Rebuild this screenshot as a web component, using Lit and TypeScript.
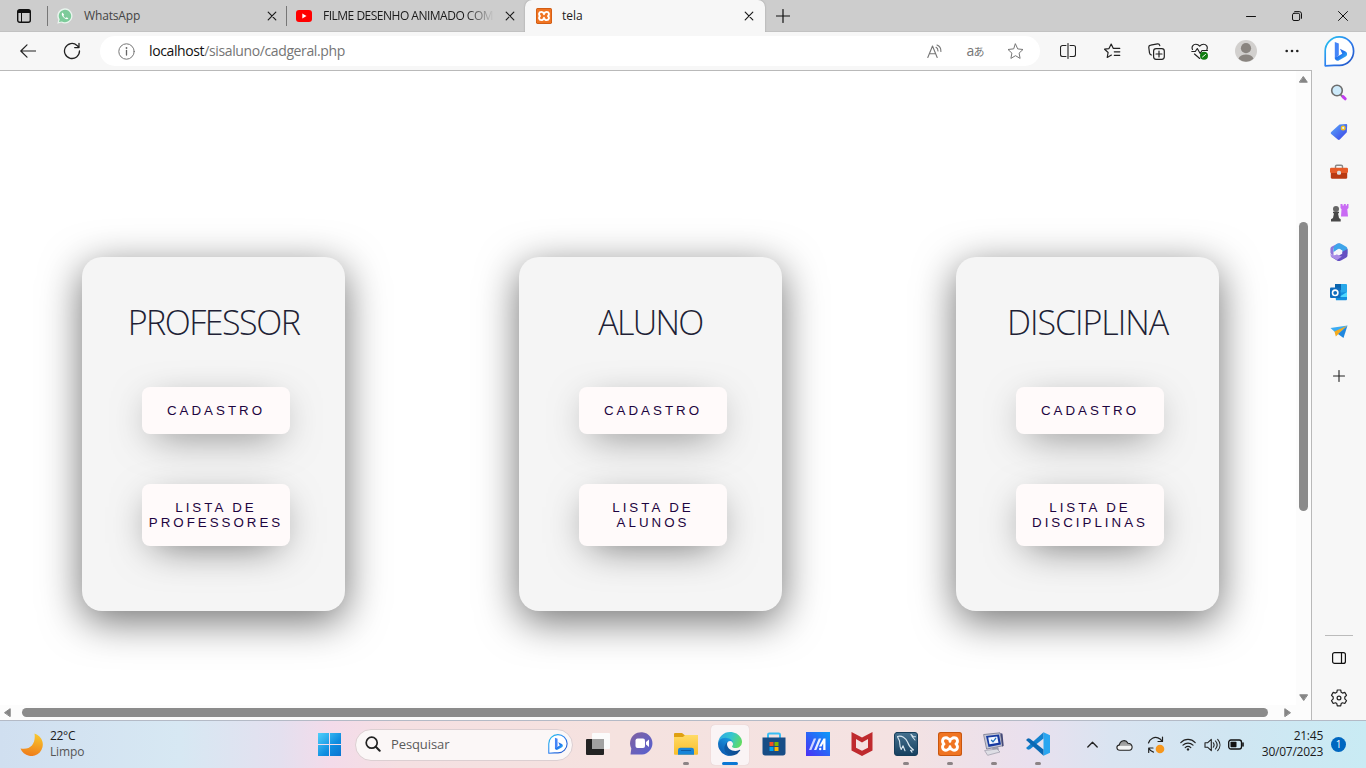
import { LitElement, html, svg, css, TemplateResult, SVGTemplateResult } from "lit";
import { customElement } from "lit/decorators.js";
import { classMap } from "lit/directives/class-map.js";

const icon = (w: number, h: number, body: SVGTemplateResult, box = `0 0 ${w} ${h}`) =>
  html`<svg width=${w} height=${h} viewBox=${box} fill="none" stroke-linecap="round" stroke-linejoin="round">${body}</svg>`;

const closeX = icon(10, 10, svg`<path d="M1.200 1.200l7.600 7.600M8.800 1.200l-7.600 7.600" stroke="#1b1b1b" stroke-width="1.200"/>`);

const xampp = (s: number) => icon(s, s, svg`
  <rect width="24" height="24" rx="2.500" fill="#c9560f"/><rect x="1" y="1" width="22" height="22" rx="2" fill="#f07422"/>
  <path d="M8 5.800c-3.800 0-4.400 4.200-2 6.200-2.400 2-1.800 6.200 2 6.200 2.300 0 2.200-1.700 4-1.700s1.700 1.700 4 1.700c3.800 0 4.400-4.200 2-6.200 2.400-2 1.800-6.200-2-6.200-2.300 0-2.200 1.700-4 1.700s-1.700-1.700-4-1.700z" stroke="#fff" stroke-width="2.900"/>
  <path d="M12 7v2.500M12 14.500V17" stroke="#fff" stroke-width="2.700"/>`, "0 0 24 24");

const bing = (s: number) => icon(s, s, svg`
  <defs><linearGradient id="bo" x1="0" y1="0" x2="1" y2="1"><stop offset="0" stop-color="#25c9ee"/><stop offset=".5" stop-color="#2d7ff0"/><stop offset="1" stop-color="#2350c0"/></linearGradient>
  <linearGradient id="bi" x1="0" y1="0" x2="1" y2="1"><stop offset="0" stop-color="#2a5fe8"/><stop offset=".5" stop-color="#2377ee"/><stop offset="1" stop-color="#38cdf5"/></linearGradient></defs>
  <path d="M1.200 29.800V15.500A14.200 14.200 0 1 1 15.500 29.300H10z" fill="#fff" stroke="url(#bo)" stroke-width="1.700"/>
  <path d="M10.800 6l4 1.500v11.700l-4 3.600z" fill="#4585f7"/><path d="M10.800 21.800l4-2 3.500-2-2.400-5 5.600 2.600c2 1 2.200 3.800.2 5.200l-7 4c-1.600.8-3.900-.6-3.900-2.800z" fill="url(#bi)"/>`, "0 0 31 31");

const g = {
  workspace: icon(14, 14, svg`<rect x=".7" y=".7" width="12.600" height="12.600" rx="2" stroke="#111" stroke-width="1.400"/><path d="M1 1h12v3H1z" fill="#111"/><path d="M4.500 4v9" stroke="#111" stroke-width="1"/>`),
  whatsapp: icon(16, 16, svg`<path d="M.3 15.700l1-4A7.600 7.600 0 1 1 4.300 14.600z" fill="#e9f5ee"/><path d="M2 14l.7-2.700a6.200 6.200 0 1 1 2.200 2.100z" fill="#7dcb9a"/><path d="M5.500 4.400c-1.400 1-.8 3 .9 4.900 1.800 1.800 4 2.700 5 1.200l-1.600-1.200-1 .8C7.700 9.600 6.800 8.700 6.400 7.700l.7-.9z" fill="#fff"/>`),
  youtube: icon(16, 12, svg`<rect width="16" height="12" rx="3" fill="#f00"/><path d="M6.300 3.500v5l4.200-2.500z" fill="#fff"/>`),
  plus: icon(14, 14, svg`<path d="M7 .5v13M.5 7h13" stroke="#111" stroke-width="1.200"/>`),
  plusSmall: icon(12, 12, svg`<path d="M6 .5v11M.5 6h11" stroke="#222" stroke-width="1.100"/>`),
  min: icon(10, 10, svg`<path d="M.5 5.500h9" stroke="#111"/>`),
  restore: icon(10, 10, svg`<rect x=".5" y="2.300" width="7.200" height="7.200" rx="1.500" stroke="#111"/><path d="M2.700.6h4.500a2.300 2.300 0 0 1 2.300 2.300v4.400" stroke="#111"/>`),
  closeWin: icon(10, 10, svg`<path d="M.5.5l9 9M9.500.5l-9 9" stroke="#111"/>`),
  back: icon(16, 14, svg`<path d="M15.500 7H1M7 .8L.8 7 7 13.200" stroke="#222" stroke-width="1.200"/>`),
  refresh: icon(18, 18, svg`<path d="M16.500 9A7.500 7.500 0 1 1 14 3.400L16 5.500M16 1.300v4.300h-4.300" stroke="#222" stroke-width="1.300"/>`),
  info: icon(17, 17, svg`<circle cx="8.500" cy="8.500" r="7.700" stroke="#767676"/><path d="M8.500 7.500v4.500" stroke="#666" stroke-width="1.300"/><circle cx="8.500" cy="5" r=".9" fill="#666"/>`),
  readAloud: icon(16, 15, svg`<path d="M.8 13.500L5.500 2l4.700 11.500M2.400 9.700h6.200" stroke="#767676" stroke-width="1.100"/><path d="M9 3.300c1.300.6 2 1.800 2 3.600M10 1c2.700 1 4 3.200 3.900 6.400" stroke="#767676" stroke-width="1.100"/>`),
  star: icon(17, 17, svg`<path d="M8.500 1l2.200 4.900 5.300.6-3.900 3.600 1 5.300-4.600-2.700-4.600 2.700 1-5.300L1 6.500l5.300-.6z" stroke="#767676"/>`),
  split: icon(16, 16, svg`<path d="M6 2.500H2.500a2 2 0 0 0-2 2v7a2 2 0 0 0 2 2H6M10 2.500h3.500a2 2 0 0 1 2 2v7a2 2 0 0 1-2 2H10M8 .5v15" stroke="#222" stroke-width="1.100"/>`),
  favorites: icon(17, 16, svg`<path d="M9.800 5.300H9.200L7.200 1 5 5.600l-4.400.6 3.500 3.300-.9 5 4.200-2.400M9.800 5.300h6M10.300 8.800h5.500M10.300 12.300h5.500" stroke="#222" stroke-width="1.200"/>`),
  collections: icon(17, 17, svg`<rect x="5.600" y="5.600" width="10.700" height="10.700" rx="2.500" stroke="#222" stroke-width="1.200"/><path d="M11 8v6M8 11h6M3.600 12C2 12 1.700 10.700 1.500 9.800L.8 4.500C.6 3 1.300 2.300 2.700 2.100L9.500.9c1.300-.2 2 .4 2.300 1.700" stroke="#222" stroke-width="1.200"/>`),
  health: icon(18, 17, svg`<path d="M1.500 6.500C.2 3.800 2.200 1.200 4.800 1.200c1.800 0 3 .8 3.900 2 .9-1.200 2.100-2 3.900-2 2.600 0 4.500 2.600 3.300 5.300M.8 8.500h3.500l2-3 2.900 5 1.800-3h5.500M3.500 11l5.200 4.500" stroke="#222" stroke-width="1.150"/><circle cx="13" cy="12.700" r="4" fill="#107c10"/><path d="M11.500 14l3-2.500" stroke="#fff"/>`),
  profile: icon(22, 22, svg`<circle cx="11" cy="11" r="11" fill="#d2d0ce"/><circle cx="11" cy="8.200" r="5.100" fill="#8a8580"/><path d="M3.500 18.800c1-3 4-4.300 7.500-4.300s6.500 1.300 7.500 4.300a11 11 0 0 1-15 0z" fill="#8a8580"/>`),
  dots: icon(14, 4, svg`<circle cx="1.700" cy="2" r="1.300" fill="#222"/><circle cx="7" cy="2" r="1.300" fill="#222"/><circle cx="12.300" cy="2" r="1.300" fill="#222"/>`),
  search: icon(19, 17, svg`<path d="M11.200 11.200l2 2" stroke="#777" stroke-width="2"/><circle cx="7" cy="6.500" r="5.300" fill="#cdeafa" stroke="#6d6d6d" stroke-width="1.600"/><path d="M13 12.600l2.200 2.200" stroke="#c13df0" stroke-width="3"/>`),
  tag: icon(18, 18, svg`<defs><linearGradient id="tg" x1="0" y1="0" x2="1" y2="1"><stop stop-color="#5cabfb"/><stop offset="1" stop-color="#3a3fe6"/></linearGradient></defs><path d="M9.500 1.500L16 1c.8 0 1.200.5 1.200 1.200l-.4 7-7 7.400c-.7.600-1.400.600-2 0L1.200 10.900c-.6-.6-.6-1.400 0-2z" fill="url(#tg)"/><circle cx="13.200" cy="4.900" r="1.800" fill="#e6eaff" stroke="#f3c11b" stroke-width="1.400"/>`),
  toolbox: icon(18, 16, svg`<path d="M5.500 4V2.500c0-.8.500-1.300 1.300-1.300h4.400c.8 0 1.300.5 1.300 1.300V4" stroke="#888" stroke-width="1.400"/><rect y="3.700" width="18" height="5.300" rx="1.200" fill="#e65b28"/><path d="M.8 9h16.400v4.500c0 .8-.5 1.200-1.200 1.200H2c-.8 0-1.200-.5-1.200-1.200z" fill="#b93a12"/><rect x="7" y="6.800" width="4" height="4" rx="1.500" fill="#ddd"/>`),
  chess: icon(19, 19, svg`<path d="M10.500 1h2v1.500h1.300V1h2v1.500H17V1h1.500v4l-1.200 1.200.7 7.300h-7l.5-7.300L10.500 5z" fill="#c96bf4"/><circle cx="6" cy="6" r="3" fill="#666"/><path d="M3 8.800h6v1.500H8l1 4.700 1.700 1.300v2.200H1v-2.200L3 15l1-4.700H3z" fill="#484848"/>`),
  m365: icon(18, 18, svg`<path d="M10.500.8L5.500 3.200C4 4 3.500 5 3.500 6.500v6l-2-1.200C.6 10.700.4 10 .4 9V6.200c0-1.200.5-2 1.500-2.600L7 .9C8.200.3 9.500.3 10.500.8z" fill="#8f75dc"/><path d="M6.500 1.100C8.500 0 9.700 0 11.500 1l4.300 2.500c1.200.7 1.700 1.600 1.700 2.900v4.300l-5.200-1.500V7.500L9 5.700 3.500 9V5.500C3.500 4 4 3.200 5 2.500z" fill="#3fa5ea"/><path d="M17.500 6v6c0 1.300-.5 2.200-1.600 2.800L11 17.500c-1.500.8-2.600.7-4-.1l-4.800-2.800C1.500 14.200 1 13.700.7 13c1.500.8 3 .6 4.500-.3l7.100-4z" fill="#6550c2"/><path d="M2 14.300c-1.200-.8-1.600-2-1.600-3.300l2.600 1c1.500.5 2.500.1 4-.8l2 1.200 3 1-5 3.700z" fill="#a98be6"/><path d="M9 5.700l3.200 1.800v3.200L9 12.500l-3.200-1.800V7.500z" fill="#f4f4fb"/>`),
  outlook: icon(18, 17, svg`<rect x="5" y="0" width="12" height="13" rx="1" fill="#28a8ea"/><path d="M5 0h6v6H5z" fill="#0a64ad"/><path d="M5 9l12-1v7c0 .8-.5 1.300-1.300 1.300H6z" fill="#1490df"/><path d="M9 13l8-5v5z" fill="#50d9ff"/><rect x="0" y="3.500" width="10.500" height="10.500" rx="1" fill="#0f6cbd"/><circle cx="5.200" cy="8.800" r="2.700" stroke="#fff" stroke-width="1.600"/>`),
  plane: icon(18, 14, svg`<path d="M.5 3L17.500.5 6 8z" fill="#3babf2"/><path d="M4.500 6.500L17.500.5 5.800 11.500z" fill="#f4ab1e"/><path d="M8 9L17.500.5l-4 12.500z" fill="#2087de"/>`),
  panel: icon(14, 12, svg`<rect x=".6" y=".6" width="12.800" height="10.800" rx="2" stroke="#111" stroke-width="1.200"/><path d="M9.500 1v10" stroke="#111" stroke-width="1.200"/>`),
  gear: icon(18, 18, svg`<path d="M7.300 1h3.400l.5 2.300 1.300.8 2.300-.7 1.700 2.900-1.700 1.700v1.900l1.700 1.700-1.700 2.900-2.300-.7-1.300.8-.5 2.300H7.300l-.5-2.300-1.300-.8-2.300.7-1.700-2.900L3.200 9.900V8L1.500 6.300l1.700-2.900 2.300.7 1.300-.8z" stroke="#222" stroke-width="1.200"/><circle cx="9" cy="9" r="1.900" stroke="#222" stroke-width="1.200"/>`),
  moon: icon(23, 23, svg`<defs><linearGradient id="mo" x1=".5" y1="0" x2=".3" y2="1"><stop stop-color="#f8c62d"/><stop offset="1" stop-color="#ef7a1a"/></linearGradient></defs><path d="M14.500.5A11.500 11.500 0 1 1 .5 15.500C11 17.500 16 10 14.500.5z" fill="url(#mo)"/>`),
  windows: icon(23, 23, svg`<defs><linearGradient id="wi" x1="0" y1="0" x2="1" y2="1"><stop stop-color="#4fd0fb"/><stop offset=".6" stop-color="#0f8de0"/><stop offset="1" stop-color="#0a74d1"/></linearGradient></defs><path d="M0 0h11v11H0zM12 0h11v11H12zM0 12h11v11H0zM12 12h11v11H12z" fill="url(#wi)"/>`),
  glass: icon(16, 16, svg`<circle cx="6.700" cy="6.700" r="5.500" stroke="#222" stroke-width="1.700"/><path d="M10.800 10.800L14.700 14.700" stroke="#222" stroke-width="2"/>`),
  taskview: icon(24, 22, svg`<rect y="6" width="18" height="16" rx="1" fill="#232323"/><rect x="6" width="18" height="16" rx="1" fill="#fbfbfb"/><path d="M6 6h12v10H6z" fill="#a2a2a2"/>`),
  chat: icon(24, 23, svg`<defs><linearGradient id="ch" x1="0" y1="0" x2="1" y2="1"><stop stop-color="#8162a0"/><stop offset="1" stop-color="#5560d2"/></linearGradient></defs><path d="M.5 22.500l.8-6A11.200 11.200 0 1 1 12 22.500z" fill="url(#ch)"/><rect x="5.500" y="6.500" width="9.500" height="9.500" rx="2" fill="#fff"/><path d="M16 10l3-2.500v7.500L16 12.500z" fill="#fff"/>`),
  folder: icon(24, 24, svg`<defs><linearGradient id="fo" x1="0" y1="0" x2="0" y2="1"><stop stop-color="#ffdb66"/><stop offset="1" stop-color="#f9bd2a"/></linearGradient></defs><path d="M0 2.200C0 1.500.5 1 1.200 1H8l2.500 2H24v8H0z" fill="#dfa012"/><path d="M0 5h9l2-2h13v18.500c0 .8-.5 1.300-1.200 1.300H1.200c-.7 0-1.200-.5-1.200-1.300z" fill="url(#fo)"/><path d="M4 22.800v-4.500c0-1.700 1-2.500 2.500-2.500h11c1.500 0 2.500.8 2.500 2.500v4.500z" fill="#1784d8"/><path d="M7.500 18.500h9" stroke="#0f5ca4" stroke-width="1.200"/>`),
  edge: icon(24, 24, svg`<defs>
      <linearGradient id="e1" x1=".2" y1=".7" x2="1" y2=".7"><stop stop-color="#0c59a4"/><stop offset="1" stop-color="#114a8b"/></linearGradient>
      <linearGradient id="e2" x1=".8" y1=".1" x2=".3" y2="1"><stop stop-color="#1b9de2"/><stop offset=".5" stop-color="#1277c8"/><stop offset="1" stop-color="#0b5ab0"/></linearGradient>
      <linearGradient id="e3" x1="0" y1=".3" x2="1" y2=".6"><stop stop-color="#2fa8e4"/><stop offset=".5" stop-color="#35c6cf"/><stop offset="1" stop-color="#62dc5f"/></linearGradient></defs>
    <path d="M231 190.500q-5 2.700-10.500 4.700a102 102 0 0 1-35.900 6.500c-47.300 0-88.500-32.600-88.500-74.300a31.500 31.500 0 0 1 16.700-27.500c-42.800 1.800-53.800 46.400-53.800 72.500 0 73.900 68.100 81.400 82.800 81.400 7.900 0 19.800-2.300 27-4.600l1.300-.4a128.300 128.300 0 0 0 66.600-52.800 4 4 0 0 0-5.700-5.500z" fill="url(#e1)"/>
    <path d="M105.700 241.400a79.200 79.200 0 0 1-22.700-21.300 80.700 80.700 0 0 1 29.800-120.300c3.100-1.400 8.500-4.100 15.600-4a32.400 32.400 0 0 1 25.700 13 31.900 31.900 0 0 1 6.300 18.700c0-.2 24.500-79.600-80-79.600-43.900 0-80 41.600-80 78.200a130.200 130.200 0 0 0 12.100 56 128 128 0 0 0 156.400 67.100 75.500 75.500 0 0 1-63.200-7.800z" fill="url(#e2)"/>
    <path d="M152.300 148.900c-.8 1-3.300 2.500-3.300 5.600 0 2.600 1.700 5.100 4.700 7.200 14.400 10 41.500 8.700 41.600 8.700a59.600 59.600 0 0 0 30.300-8.300A61.400 61.400 0 0 0 256 109.200c.3-22.400-8-37.300-11.300-43.900C223.500 23.800 177.700 0 128 0A128 128 0 0 0 0 126.200c.5-36.500 36.800-66 80-66 3.500 0 23.500.3 42 10 16.300 8.600 24.900 19 30.900 29.200 6.100 10.700 7.200 24.200 7.200 29.500s-2.700 13.400-7.800 20z" fill="url(#e3)"/>`, "0 0 256 256"),
  store: icon(24, 24, svg`<path d="M6 6V2.800c0-.8.500-1.300 1.300-1.300h9.400c.8 0 1.300.5 1.300 1.300V6" stroke="#38bdf4" stroke-width="2"/><path d="M.5 5.500h23V21c0 1.500-1 2.500-2.500 2.500H3C1.500 23.500.5 22.500.5 21z" fill="#174d86"/><path d="M7.500 10h4v4h-4z" fill="#f25022"/><path d="M12.500 10h4v4h-4z" fill="#7fba00"/><path d="M7.500 15h4v4h-4z" fill="#00a4ef"/><path d="M12.500 15h4v4h-4z" fill="#ffb900"/>`),
  myasus: icon(24, 24, svg`<defs><linearGradient id="ma" x1="0" y1="1" x2="1" y2="0"><stop stop-color="#4b2ff5"/><stop offset="1" stop-color="#0a9bf8"/></linearGradient></defs><path d="M0 0h24v24H0z" fill="url(#ma)"/><path d="M3 18L7.800 6.500h2.400L5.400 18z" fill="#cfd6ff"/><path d="M8 18l4.800-11.500h2.400L10.400 18z" fill="#e8eeff"/><path d="M13 14.500l4.500-8h2V18h-2.300v-6.800L15.500 14.500z" fill="#fff"/><circle cx="14.200" cy="17" r="1.200" fill="#fff"/>`),
  mcafee: icon(22, 24, svg`<path d="M.5 0L11 5.500 21.500 0v18.500L11 24 .5 18.500zM5 7v8.700l6 3.100 6-3.100V7l-6 3.500z" fill="#bf2a2e" fill-rule="evenodd"/>`),
  workbench: icon(24, 24, svg`<defs><linearGradient id="wb" x1="0" y1="0" x2="0" y2="1"><stop stop-color="#46718f"/><stop offset="1" stop-color="#16405f"/></linearGradient></defs><rect x=".5" y=".5" width="23" height="23" rx="2.500" fill="url(#wb)" stroke="#173e5a"/><path d="M3.500 4.500c4-1.500 8.500 1.500 10 5.500 1 3 2.500 5.500 6 8l-3 .2 1.500 2M3.500 4.500c.5 2 1.500 3 2 4.500.6 2.500-.3 5 1.700 8.500l1.800-3.700 2 5M17 2.500l2 2 2.500.2M18 4.500l3 3.500" stroke="#d8e6ef" stroke-width="1.100"/>`),
  monitor: icon(24, 24, svg`<path d="M2 2.500L18 .8l2.500 13L5 17z" fill="#c6c8d6" stroke="#74768c" stroke-width=".8"/><path d="M4 4L17 2.500l2 10L6.500 15z" fill="#173aa0"/><path d="M6.200 5.500l9-1 1.300 6.300-9 1.500z" fill="#f1f6ff"/><path d="M9.500 8.300l1.500 1.500L13.700 6.300" stroke="#2573bf" stroke-width="1.300"/><path d="M10 16l6-1.200 1 3-6 1z" fill="#9a9cab"/><path d="M3 18.500l12-1.500 3 3-12 3.200z" fill="#dedee5" stroke="#9a9aa8" stroke-width=".7"/><path d="M18.500 1l2 .8 1.200 12-1.500 1z" fill="#454a78"/>`),
  vscode: icon(24, 24, svg`<path d="M17.500.3L24 3.200v17.600l-6.500 2.900z" fill="#2aa6f0"/><path d="M17.500.3v6.300L4 17.200l-2 .5L0 16z" fill="#1482cf"/><path d="M17.500 23.700v-6.300L4 6.800 2 6.300 0 8z" fill="#0b68b3"/>`),
  up: icon(11, 7, svg`<path d="M.8 6L5.500 1.200 10.200 6" stroke="#222" stroke-width="1.300"/>`),
  cloud: icon(17, 12, svg`<defs><linearGradient id="cl" x1="0" y1="0" x2="0" y2="1"><stop stop-color="#8f8f8f"/><stop offset=".5" stop-color="#a9a9a9"/><stop offset=".6" stop-color="#f4f4f4"/></linearGradient></defs><path d="M3.800 11.200C.2 11.200-.2 6.500 3.400 5.900 4.200 1 10 .2 11.900 4.200c5 0 5.700 7 1.300 7z" fill="url(#cl)" stroke="#222" stroke-width="1.100"/>`),
  sync: icon(18, 18, svg`<path d="M1.500 7C3 2.500 7.500.6 11 1.900c2 .7 3.300 1.800 4 3.300M15.500 1v4.500H11M1.700 16.500V12H6M2 12.500c1 2 2.500 3.200 4.500 3.700" stroke="#222" stroke-width="1.200"/><circle cx="13" cy="13" r="4.300" fill="#f7971c"/>`),
  wifi: icon(16, 13, svg`<path d="M.8 4.600c4-4.200 10.400-4.200 14.400 0M3 7.200c2.800-2.800 7.200-2.800 10 0M5.200 9.600c1.600-1.600 4-1.600 5.600 0" stroke="#222" stroke-width="1.200"/><circle cx="8" cy="11.400" r="1.200" fill="#222"/>`),
  volume: icon(17, 14, svg`<path d="M1 4.800h2.500L7.300 1.300v11.400L3.500 9.200H1z" stroke="#222" stroke-width="1.100"/><path d="M9.300 4.800c1 1.400 1 3 0 4.400M11.500 3c2 2.400 2 5.600 0 8M13.700 1.300c3 3.400 3 8 0 11.400" stroke="#222" stroke-width="1.100"/>`),
  battery: icon(16, 11, svg`<rect x=".7" y="1" width="12.800" height="9" rx="2.200" stroke="#111" stroke-width="1.300"/><rect x="2.500" y="2.800" width="6" height="5.400" rx=".7" fill="#111"/><path d="M15 4v3" stroke="#111" stroke-width="1.600"/>`),
  arrowUp: icon(9, 7, svg`<path d="M4.500.8L8.300 6.200H.7z" fill="#858585" stroke="#858585"/>`),
  arrowDown: icon(9, 7, svg`<path d="M4.500 6.200L.7.800h7.600z" fill="#858585" stroke="#858585"/>`),
  arrowLeft: icon(7, 9, svg`<path d="M.8 4.500L6.200.7v7.600z" fill="#858585" stroke="#858585"/>`),
  arrowRight: icon(7, 9, svg`<path d="M6.200 4.500L.8.700v7.600z" fill="#858585" stroke="#858585"/>`),
};

const cards = [
  { title: "PROFESSOR", list: "PROFESSORES", cls: "t1" },
  { title: "ALUNO", list: "ALUNOS", cls: "t2" },
  { title: "DISCIPLINA", list: "DISCIPLINAS", cls: "t3" },
];

const tasks: { i: TemplateResult; run?: boolean; active?: boolean }[] = [
  { i: g.taskview }, { i: g.chat }, { i: g.folder, run: true }, { i: g.edge, run: true, active: true },
  { i: g.store }, { i: g.myasus }, { i: g.mcafee }, { i: g.workbench, run: true },
  { i: xampp(24), run: true }, { i: g.monitor, run: true }, { i: g.vscode, run: true },
];

@customElement("app-root")
export class AppRoot extends LitElement {
  static styles = css`
    :host { display: flex; flex-direction: column; width: 1366px; height: 768px; overflow: hidden; background: #fff; color: #1b1b1b; font: 12px "Open Sans", "Noto Sans", sans-serif; }
    * { box-sizing: border-box; }
    svg { display: block; flex: none; }
    .slot { display: flex; align-items: center; justify-content: center; flex: none; }
    .tabs { height: 32px; background: #cdcdcd; display: flex; flex: none; box-shadow: inset 0 -1px #c2c2c2; }
    .ws { width: 47px; }
    .tab { display: flex; align-items: center; width: 239px; padding: 0 10px 0 10px; gap: 11px; white-space: nowrap; background: linear-gradient(#777, #777) left center / 1px 20px no-repeat; }
    .tab .label { flex: 1; min-width: 0; line-height: 20px; }
    .tab.wa { padding: 0 9px 0 10px; gap: 10px; }
    .tab.wa .label { color: #444; letter-spacing: -.15px; padding-left: 1px; }
    .tab.yt .label { letter-spacing: -.5px; -webkit-mask-image: linear-gradient(90deg, #000 84%, transparent); mask-image: linear-gradient(90deg, #000 84%, transparent); }
    .tab.on { width: 240px; gap: 10px; background: #f7f7f7; border-radius: 7px 7px 0 0; padding: 0 11px; box-shadow: 0 0 2px #999; clip-path: inset(0 -3px 0 -3px); }
    .new { width: 36px; }
    .fill { flex: 1; }
    .win { width: 46px; }
    .bar { height: 38px; background: #f7f7f7; display: flex; align-items: center; flex: none; }
    .b44 { width: 44px; } .b40 { width: 40px; } .b48 { width: 48px; }
    .nav { width: 100px; display: flex; padding-left: 6px; flex: none; }
    .addr { height: 30px; width: 940px; border-radius: 15px; background: #fff; display: flex; align-items: center; padding-left: 18px; padding-right: 5px; flex: none; }
    .url { font-size: 14px; color: #757575; padding-left: 14px; flex: 1; letter-spacing: -.38px; line-height: 20px; }
    .url b { font-weight: 400; color: #111; }
    .trans { color: #767676; font: 14px "Open Sans", "Noto Sans CJK JP", sans-serif; letter-spacing: -.8px; padding-bottom: 2px; }
    .trans small { font-size: 11px; }
    .actions { display: flex; padding-left: 6px; }
    .bingslot { width: 50px; }
    .mid { flex: 1; display: flex; min-height: 0; background: #f7f7f7; }
    .view { width: 1312px; border-top: 1px solid #b9b9b9; border-right: 1px solid #b9b9b9; display: grid; grid-template-columns: 1fr 15px; grid-template-rows: 1fr 15px; background: #fcfcfc; }
    .page { background: #fff; padding: 186px 0 0 82px; display: flex; gap: 174px; align-items: flex-start; overflow: hidden; }
    .card { width: 263px; height: 354px; border-radius: 20px; background: #f5f5f5; box-shadow: 0 10px 40px rgba(0,0,0,.56); display: flex; flex-direction: column; padding-top: 41px; flex: none; }
    h1 { margin: 0; font: 300 34px/48px "Open Sans", sans-serif; color: #211f35; text-align: center; white-space: nowrap; }
    .t1 { letter-spacing: -1.500px; } .t2 { letter-spacing: -1.700px; } .t3 { letter-spacing: -1.050px; }
    .btn { margin: 0 0 50px 60px; width: 148px; padding: 16px 0; border-radius: 8px; background: snow; box-shadow: 0 10px 40px -12px rgba(0,0,0,.62); font: 13.33px/15px "Liberation Sans", Arial, sans-serif; letter-spacing: 3px; text-align: center; color: #1d0440; }
    h1 + .btn { margin-top: 41px; }
    .vs { display: flex; flex-direction: column; align-items: center; padding: 5px 0 4px; }
    .vs .track { flex: 1; padding: 139px 0 0; }
    .vs .thumb { width: 9px; height: 289px; border-radius: 5px; background: #8b8b8b; }
    .hs { display: flex; align-items: center; padding: 0 5px 0 4px; }
    .hs .thumb { flex: 1; height: 9px; border-radius: 5px; background: #8b8b8b; margin: 0 16px 0 11px; }
    .side { width: 54px; display: flex; flex-direction: column; align-items: center; padding: 2px 0; }
    .s40 { width: 54px; height: 40px; }
    .plus { height: 47px; }
    .side hr { width: 28px; margin: 0 0 2px; border: 0; border-top: 1px solid #bbb; }
    .task { height: 48px; flex: none; display: flex; align-items: center; border-top: 1px solid #b4bac6;
      background: linear-gradient(90deg, #d0dff0 0, #d7e8f3 180px, #e4e0ef 280px, #f3dbea 330px, #f5e0e2 400px, #f5e2df 620px, #f4e2e2 900px, #e9e0ee 1030px, #dae4f1 1110px, #d0e6f2 1230px, #c9ebf4 1366px); }
    .weather { width: 307px; display: flex; align-items: center; padding-left: 20px; gap: 7px; line-height: 16px; flex: none; }
    .weather div { letter-spacing: -.3px; padding-bottom: 2px; } .weather span { display: block; color: #555; letter-spacing: -.15px; }
    .find { width: 218px; height: 32px; border-radius: 16px; background: #fbf7f7; border: 1px solid #dccfd2; display: flex; align-items: center; padding: 0 4px 1px 9px; font-size: 13px; color: #5a5a5a; gap: 10px; margin: 0 3px 0 4px; }
    .find span { flex: 1; letter-spacing: -.1px; padding-bottom: 1px; }
    .app { width: 38px; height: 40px; margin: 0 3px; border-radius: 4px; display: grid; grid-template-rows: 37px 3px; justify-items: center; align-items: center; flex: none; }
    .app svg { margin-top: 1px; }
    .app.run::after { content: ""; width: 6px; height: 3px; border-radius: 2px; background: #8c8385; }
    .app.active { background: #faf4f5; box-shadow: 0 0 1px #c9b8bb; }
    .app.active::after { width: 16px; background: #0a78d4; }
    .tray { display: flex; padding-left: 16px; }
    .w32 { width: 32px; } .w28 { width: 28px; padding-left: 4px; } .w24 { width: 24px; }
    .clock { width: 75px; text-align: right; line-height: 16px; letter-spacing: -.25px; padding-bottom: 1px; }
    .note { width: 15px; height: 15px; border-radius: 50%; background: #0067c0; color: #fff; font-size: 10px; line-height: 15px; text-align: center; margin-left: 8px; }
  `;

  render() {
    return html`
      <div class="tabs">
        <div class="slot ws">${g.workspace}</div>
        <div class="tab wa">${g.whatsapp}<span class="label">WhatsApp</span>${closeX}</div>
        <div class="tab yt">${g.youtube}<span class="label">FILME DESENHO ANIMADO COM</span>${closeX}</div>
        <div class="tab on">${xampp(16)}<span class="label">tela</span>${closeX}</div>
        <div class="slot new">${g.plus}</div>
        <div class="fill"></div>
        <div class="slot win">${g.min}</div><div class="slot win">${g.restore}</div><div class="slot win">${g.closeWin}</div>
      </div>
      <div class="bar">
        <div class="nav"><div class="slot b44">${g.back}</div><div class="slot b44">${g.refresh}</div></div>
        <div class="addr">${g.info}<div class="url"><b>localhost</b>/sisaluno/cadgeral.php</div>
          <div class="slot b40">${g.readAloud}</div><div class="slot b40 trans"><span>a<small>あ</small></span></div><div class="slot b40">${g.star}</div></div>
        <div class="actions">
          ${[g.split, g.favorites, g.collections, g.health].map((i) => html`<div class="slot b44">${i}</div>`)}
          <div class="slot b48">${g.profile}</div><div class="slot b44">${g.dots}</div>
          <div class="slot bingslot">${bing(31)}</div>
        </div>
      </div>
      <div class="mid">
        <div class="view">
          <div class="page">${cards.map((c) => html`
            <div class="card"><h1 class=${c.cls}>${c.title}</h1>
              <div class="btn">CADASTRO</div><div class="btn">LISTA DE<br>${c.list}</div></div>`)}
          </div>
          <div class="vs">${g.arrowUp}<div class="track"><div class="thumb"></div></div>${g.arrowDown}</div>
          <div class="hs">${g.arrowLeft}<div class="thumb"></div>${g.arrowRight}</div>
        </div>
        <div class="side">
          ${[g.search, g.tag, g.toolbox, g.chess, g.m365, g.outlook, g.plane].map((i) => html`<div class="slot s40">${i}</div>`)}
          <div class="slot plus">${g.plusSmall}</div>
          <div class="fill"></div><hr>
          <div class="slot s40">${g.panel}</div><div class="slot s40">${g.gear}</div>
        </div>
      </div>
      <div class="task">
        <div class="weather">${g.moon}<div>22°C<span>Limpo</span></div></div>
        <div class="slot b44">${g.windows}</div>
        <div class="find">${g.glass}<span>Pesquisar</span>${bing(20)}</div>
        ${tasks.map((t) => html`<div class=${classMap({ app: true, run: !!t.run, active: !!t.active })}>${t.i}</div>`)}
        <div class="tray"><div class="slot w32">${g.up}</div><div class="slot w32">${g.cloud}</div><div class="slot w32">${g.sync}</div>
          <div class="slot w28">${g.wifi}</div><div class="slot w24">${g.volume}</div><div class="slot w24">${g.battery}</div></div>
        <div class="clock">21:45<br>30/07/2023</div><div class="note">1</div>
      </div>`;
  }
}
